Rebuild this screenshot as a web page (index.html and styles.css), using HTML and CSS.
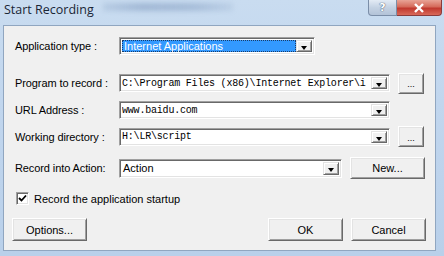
FILE: index.html
```html
<!DOCTYPE html>
<html>
<head>
<meta charset="utf-8">
<link rel="stylesheet" href="styles.css">
</head>
<body>
<div class="window">
  <div class="titlebar">
    <span class="title">Start Recording</span>
    <div class="ghost"></div>
    <div class="caption-btns">
      <div class="cbtn help">?</div>
      <div class="cbtn close">
        <svg width="14" height="10" viewBox="0 0 14 10"><path d="M3 1 L11 9 M11 1 L3 9" stroke="#fff" stroke-width="2.4" fill="none"/></svg>
      </div>
    </div>
  </div>
  <div class="client">
    <div class="row r1">
      <label class="lbl">Application type :</label>
      <div class="combo w-app">
        <div class="val sel"><span>Internet Applications</span></div>
        <div class="arrow"></div>
      </div>
    </div>
    <div class="row r2">
      <label class="lbl">Program to record :</label>
      <div class="combo w-long">
        <div class="val mono">C:\Program Files (x86)\Internet Explorer\i</div>
        <div class="arrow"></div>
      </div>
      <div class="btn small">...</div>
    </div>
    <div class="row r3">
      <label class="lbl">URL Address :</label>
      <div class="combo w-long">
        <div class="val mono">www.baidu.com</div>
        <div class="arrow"></div>
      </div>
    </div>
    <div class="row r4">
      <label class="lbl">Working directory :</label>
      <div class="combo w-long">
        <div class="val mono">H:\LR\script</div>
        <div class="arrow"></div>
      </div>
      <div class="btn small">...</div>
    </div>
    <div class="row r5">
      <label class="lbl">Record into Action:</label>
      <div class="combo w-act">
        <div class="val">Action</div>
        <div class="arrow"></div>
      </div>
      <div class="btn wide">New...</div>
    </div>
    <div class="row r6">
      <div class="check">
        <svg width="9" height="9" viewBox="0 0 9 9"><path d="M1 4 L3.5 6.5 L8 1.5" stroke="#000" stroke-width="1.8" fill="none"/></svg>
      </div>
      <span class="chk-lbl">Record the application startup</span>
    </div>
    <div class="row r7">
      <div class="btn wide opt">Options...</div>
      <div class="spacer"></div>
      <div class="btn wide">OK</div>
      <div class="btn wide">Cancel</div>
    </div>
  </div>
</div>
</body>
</html>
```

FILE: styles.css
```css
html, body {
  margin: 0;
  padding: 0;
}
body {
  width: 444px;
  height: 256px;
  overflow: hidden;
  font-family: "Liberation Sans", Arial, sans-serif;
  font-size: 11px;
  color: #000;
}
.window {
  width: 444px;
  height: 256px;
  background: linear-gradient(to bottom, #c9dcf0 0%, #c1d6ee 40%, #b9d0ea 100%);
  display: flex;
  flex-direction: column;
  box-sizing: border-box;
  padding: 0 8px 5px 3px;
}
.titlebar {
  height: 25px;
  display: flex;
  align-items: flex-start;
  position: relative;
  flex: none;
}
.title {
  font-family: "Open Sans", "Noto Sans", sans-serif;
  font-size: 12.5px;
  color: #1a2636;
  padding-left: 1px;
  padding-top: 1px;
  line-height: 18px;
}
.ghost {
  position: absolute;
  left: 100px;
  top: 3px;
  width: 130px;
  height: 8px;
  background: linear-gradient(to right, rgba(90,120,165,0.15), rgba(90,120,165,0.35) 30%, rgba(90,120,165,0.3) 70%, rgba(90,120,165,0.1));
  filter: blur(2.5px);
}
.caption-btns {
  position: absolute;
  right: -6px;
  top: 0;
  display: flex;
}
.cbtn {
  height: 16px;
  box-sizing: border-box;
  display: flex;
  align-items: center;
  justify-content: center;
}
.help {
  width: 29px;
  border: 1px solid #7b8ea8;
  border-top: none;
  border-radius: 0 0 0 4px;
  background: linear-gradient(to bottom, #e3ebf5, #c4d2e3 50%, #b3c3d8);
  color: #fff;
  font-family: "DejaVu Sans", sans-serif;
  font-weight: bold;
  font-size: 11px;
  text-shadow: 0 0 1px #43546e, 0 0 1px #43546e;
}
.close {
  width: 45px;
  border: 1px solid #8a3b3b;
  border-top: none;
  border-left: none;
  border-radius: 0 0 4px 0;
  background: linear-gradient(to bottom, #e8a496, #d56a5a 45%, #c0392e 55%, #d9695a);
}
.client {
  flex: 1;
  background: #f0f0f0;
  border: 1px solid #90a6c0;
  box-sizing: border-box;
  display: flex;
  flex-direction: column;
  padding: 11px 9px 0 11px;
}
.row {
  display: flex;
  align-items: center;
  flex: none;
}
.r1 { height: 18px; margin-top: 0; }
.r2 { height: 22px; margin-top: 17px; }
.r3 { height: 18px; margin-top: 7px; }
.r4 { height: 21px; margin-top: 7px; }
.r5 { height: 22px; margin-top: 10px; }
.r6 { height: 13px; margin-top: 13px; }
.r7 { height: 23px; margin-top: 13px; }
.lbl {
  width: 104px;
  flex: none;
  white-space: nowrap;
  font-size: 11px;
  letter-spacing: -0.1px;
}
.combo {
  height: 18px;
  box-sizing: border-box;
  background: #fff;
  border-top: 1px solid #a0a0a0;
  border-left: 1px solid #a0a0a0;
  border-right: 1px solid #fff;
  border-bottom: 1px solid #fff;
  box-shadow: inset 1px 1px 0 #696969, inset -1px -1px 0 #e3e3e3;
  display: flex;
  align-items: center;
  padding: 2px;
  flex: none;
}
.r5 .combo { height: 19px; }
.w-app { width: 196px; }
.w-long { width: 271px; }
.w-act { width: 223px; }
.val {
  flex: 1;
  height: 100%;
  display: flex;
  align-items: center;
  white-space: nowrap;
  overflow: hidden;
  padding-left: 1px;
}
.mono {
  font-family: "Liberation Mono", "Courier New", monospace;
  font-size: 10px;
  letter-spacing: -0.2px;
  padding-left: 0;
}
.sel {
  background: #3399ff;
  color: #fff;
  outline: 1px dotted #1a3b66;
  outline-offset: -1px;
  padding-left: 2px;
}
.arrow {
  width: 16px;
  height: 100%;
  box-sizing: border-box;
  flex: none;
  background: #f0f0f0;
  border-top: 1px solid #e3e3e3;
  border-left: 1px solid #e3e3e3;
  border-right: 1px solid #696969;
  border-bottom: 1px solid #696969;
  box-shadow: inset 1px 1px 0 #fff, inset -1px -1px 0 #a0a0a0;
  position: relative;
}
.arrow::after {
  content: "";
  position: absolute;
  left: 4px;
  top: 5px;
  border-left: 3.5px solid transparent;
  border-right: 3.5px solid transparent;
  border-top: 4px solid #000;
}
.btn {
  box-sizing: border-box;
  background: #f0f0f0;
  border-top: 1px solid #fff;
  border-left: 1px solid #fff;
  border-right: 1px solid #696969;
  border-bottom: 1px solid #696969;
  box-shadow: inset 1px 1px 0 #e3e3e3, inset -1px -1px 0 #a0a0a0;
  display: flex;
  align-items: center;
  justify-content: center;
  flex: none;
  font-size: 11px;
}
.small {
  width: 26px;
  height: 21px;
  margin-left: 8px;
  font-size: 9px;
  padding-top: 2px;
}
.wide {
  width: 75px;
  height: 22px;
  margin-left: 8px;
}
.r7 .wide { height: 23px; }
.opt { margin-left: -3px; }
.spacer { flex: 1; }
.check {
  width: 13px;
  height: 13px;
  box-sizing: border-box;
  background: #fff;
  border-top: 1px solid #a0a0a0;
  border-left: 1px solid #a0a0a0;
  border-right: 1px solid #fff;
  border-bottom: 1px solid #fff;
  box-shadow: inset 1px 1px 0 #696969, inset -1px -1px 0 #e3e3e3;
  display: flex;
  align-items: center;
  justify-content: center;
  margin-left: 1px;
  flex: none;
}
.chk-lbl {
  margin-left: 5px;
  white-space: nowrap;
}
```
